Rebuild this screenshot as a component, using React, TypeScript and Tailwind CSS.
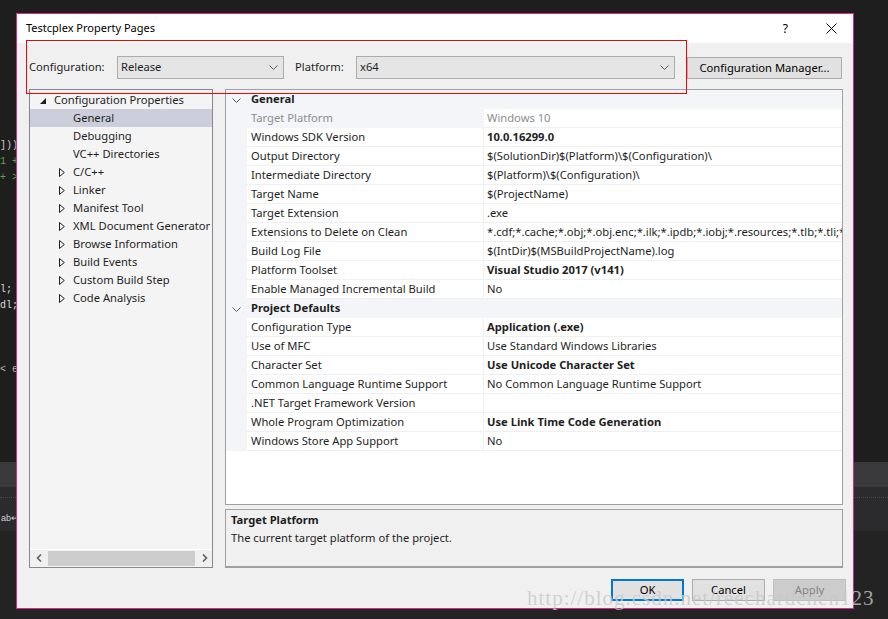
import type { ReactNode } from "react";

type TreeItem = { label: string; level: 0 | 1; expanded?: boolean; collapsed?: boolean; selected?: boolean };

const tree: TreeItem[] = [
  { label: "Configuration Properties", level: 0, expanded: true },
  { label: "General", level: 1, selected: true },
  { label: "Debugging", level: 1 },
  { label: "VC++ Directories", level: 1 },
  { label: "C/C++", level: 1, collapsed: true },
  { label: "Linker", level: 1, collapsed: true },
  { label: "Manifest Tool", level: 1, collapsed: true },
  { label: "XML Document Generator", level: 1, collapsed: true },
  { label: "Browse Information", level: 1, collapsed: true },
  { label: "Build Events", level: 1, collapsed: true },
  { label: "Custom Build Step", level: 1, collapsed: true },
  { label: "Code Analysis", level: 1, collapsed: true },
];

type Prop = { name: string; value: string; bold?: boolean; readonly?: boolean };

const groups: { title: string; rows: Prop[] }[] = [
  {
    title: "General",
    rows: [
      { name: "Target Platform", value: "Windows 10", readonly: true },
      { name: "Windows SDK Version", value: "10.0.16299.0", bold: true },
      { name: "Output Directory", value: "$(SolutionDir)$(Platform)\\$(Configuration)\\" },
      { name: "Intermediate Directory", value: "$(Platform)\\$(Configuration)\\" },
      { name: "Target Name", value: "$(ProjectName)" },
      { name: "Target Extension", value: ".exe" },
      {
        name: "Extensions to Delete on Clean",
        value: "*.cdf;*.cache;*.obj;*.obj.enc;*.ilk;*.ipdb;*.iobj;*.resources;*.tlb;*.tli;*.tlh;*.tmp;*.rsp;*.pgc;*.pgd;*.meta;*.tlog",
      },
      { name: "Build Log File", value: "$(IntDir)$(MSBuildProjectName).log" },
      { name: "Platform Toolset", value: "Visual Studio 2017 (v141)", bold: true },
      { name: "Enable Managed Incremental Build", value: "No" },
    ],
  },
  {
    title: "Project Defaults",
    rows: [
      { name: "Configuration Type", value: "Application (.exe)", bold: true },
      { name: "Use of MFC", value: "Use Standard Windows Libraries" },
      { name: "Character Set", value: "Use Unicode Character Set", bold: true },
      { name: "Common Language Runtime Support", value: "No Common Language Runtime Support" },
      { name: ".NET Target Framework Version", value: "" },
      { name: "Whole Program Optimization", value: "Use Link Time Code Generation", bold: true },
      { name: "Windows Store App Support", value: "No" },
    ],
  },
];

// bits of the code editor that peek out from behind the dialog
const codeLines: { text: string; color: string }[] = [
  { text: "]));", color: "text-[#c8c8c8]" },
  { text: "1 + ", color: "text-[#57a64a]" },
  { text: "+ >", color: "text-[#57a64a]" },
  { text: "", color: "" },
  { text: "", color: "" },
  { text: "", color: "" },
  { text: "", color: "" },
  { text: "", color: "" },
  { text: "", color: "" },
  { text: "l;", color: "text-[#dcdcdc]" },
  { text: "dl;", color: "text-[#dcdcdc]" },
  { text: "", color: "" },
  { text: "", color: "" },
  { text: "", color: "" },
  { text: "< e", color: "text-[#b4b4b4]" },
];

function Chevron({ className = "" }: { className?: string }) {
  return (
    <svg width="9" height="5" viewBox="0 0 9 5" className={className}>
      <polyline points="0.5,0.5 4.5,4.5 8.5,0.5" fill="none" stroke="#5a5a5a" strokeWidth="1" />
    </svg>
  );
}

function Combo({ value, width }: { value: string; width: string }) {
  return (
    <div className={`${width} h-[23px] shrink-0 flex items-center justify-between bg-[#e5e5e5] border border-[#acacac] pl-[3px] pr-[5px]`}>
      <span>{value}</span>
      <Chevron />
    </div>
  );
}

function Button({ children, variant = "normal", width }: { children: ReactNode; variant?: "normal" | "default" | "disabled"; width: string }) {
  const look =
    variant === "default"
      ? "border-2 border-[#0078d7] bg-[#e1e1e1] text-[#000]"
      : variant === "disabled"
      ? "border border-[#bfbfbf] bg-[#cccccc] text-[#838383]"
      : "border border-[#adadad] bg-[#e1e1e1] text-[#000]";
  return <div className={`${width} h-[22px] shrink-0 flex items-center justify-center ${look}`}>{children}</div>;
}

function TreeRow({ item }: { item: TreeItem }) {
  return (
    <div className={`h-[18px] flex items-center relative ${item.selected ? "bg-[#cccedb]" : ""}`}>
      {item.expanded && (
        <svg width="6" height="6" viewBox="0 0 6 6" className="absolute left-[10px] top-[7px]">
          <polygon points="6,0 6,6 0,6" fill="#1e1e1e" />
        </svg>
      )}
      {item.collapsed && (
        <svg width="6" height="9" viewBox="0 0 6 9" className="absolute left-[29px] top-[5px]">
          <polygon points="0.5,0.5 5.3,4.5 0.5,8.5" fill="none" stroke="#1e1e1e" strokeWidth="1" />
        </svg>
      )}
      <span className={item.level === 0 ? "pl-[24px]" : "pl-[43px]"}>{item.label}</span>
    </div>
  );
}

function PropRow({ row }: { row: Prop }) {
  return (
    <div className="flex h-[19px]">
      <div className="w-[21px] shrink-0 bg-[#f3f5f9]" />
      <div
        className={`w-[237px] shrink-0 flex items-center pl-[4px] border-r border-b ${
          row.readonly ? "bg-[#f3f5f9] text-[#8d8d8d] border-[#f3f5f9]" : "bg-white border-[#eef0f4]"
        }`}
      >
        {row.name}
      </div>
      <div
        className={`flex-1 min-w-0 flex items-center pl-[3px] bg-white border-b border-[#eef0f4] overflow-hidden whitespace-nowrap ${
          row.readonly ? "text-[#8d8d8d]" : ""
        } ${row.bold ? "font-bold" : ""}`}
      >
        {row.value}
      </div>
    </div>
  );
}

function CategoryRow({ title }: { title: string }) {
  return (
    <div className="h-[19px] flex items-center bg-[#f3f5f9] relative">
      <Chevron className="absolute left-[6px] top-[8px]" />
      <span className="pl-[25px] font-bold">{title}</span>
    </div>
  );
}

export default function App() {
  return (
    <div className="w-[888px] h-[619px] relative overflow-hidden bg-[#1e1e1e] font-['Noto_Sans','Open_Sans',sans-serif] text-[11.2px] text-[#1e1e1e]">
      {/* editor behind the dialog */}
      <div className="flex flex-col h-full">
        <div className="h-[462px] pt-[138px] flex flex-col font-['Liberation_Mono',monospace] text-[10px]">
          {codeLines.map((l, i) => (
            <div key={i} className={`h-[16px] leading-[16px] whitespace-pre ${l.color}`}>
              {l.text}
            </div>
          ))}
        </div>
        <div className="h-[25px] bg-[#3a3a3d]" />
        <div className="h-[44px] bg-[#2b2b2d] flex flex-col">
          <div className="mt-[10px] border-t border-dotted border-[#48484b]" />
          <div className="mt-[16px] pl-[1px] text-[9px] leading-[9px] text-[#d0d0d0] font-['Liberation_Sans',sans-serif]">ab↵</div>
        </div>
        <div className="flex-1 bg-[#232323]" />
      </div>

      {/* dialog window */}
      <div className="absolute left-[16px] top-[13px] w-[838px] h-[596px] border border-[#d62a8c] flex flex-col">
        <div className="h-[29px] shrink-0 bg-white flex items-center pl-[9px] text-[#000]">
          <span className="text-[11px]">Testcplex Property Pages</span>
          <span className="ml-auto mr-[38px] text-[12px]">?</span>
          <svg width="11" height="11" viewBox="0 0 11 11" className="mr-[16px]">
            <line x1="0.5" y1="0.5" x2="10.5" y2="10.5" stroke="#000" strokeWidth="1" />
            <line x1="10.5" y1="0.5" x2="0.5" y2="10.5" stroke="#000" strokeWidth="1" />
          </svg>
        </div>

        <div className="flex-1 bg-[#f0f0f0] flex flex-col pl-[12px] pr-[10px]">
          <div className="mt-[13px] h-[23px] flex items-center">
            <span className="w-[88px] shrink-0">Configuration:</span>
            <Combo value="Release" width="w-[167px]" />
            <span className="ml-[11px] w-[61px] shrink-0">Platform:</span>
            <Combo value="x64" width="w-[319px]" />
            <div className="ml-[12px] mt-[1px]">
              <Button width="w-[155px]">Configuration Manager...</Button>
            </div>
          </div>

          <div className="mt-[10px] h-[479px] flex">
            <div className="w-[184px] h-[479px] shrink-0 border border-[#828790] bg-[#f4f4f4] flex flex-col">
              <div className="flex-1 pt-[1px]">
                {tree.map((t) => (
                  <TreeRow key={t.label} item={t} />
                ))}
              </div>
              <div className="h-[17px] mb-[1px] border-t border-white bg-[#f0f0f0] flex items-center">
                <svg width="6" height="8" viewBox="0 0 6 8" className="ml-[6px]">
                  <polyline points="5,0.5 1.5,4 5,7.5" fill="none" stroke="#606060" strokeWidth="1.6" />
                </svg>
                <div className="ml-[6px] w-[147px] h-[15px] bg-[#cdcdcd]" />
                <svg width="6" height="8" viewBox="0 0 6 8" className="ml-[7px]">
                  <polyline points="1,0.5 4.5,4 1,7.5" fill="none" stroke="#606060" strokeWidth="1.6" />
                </svg>
              </div>
            </div>

            <div className="ml-[12px] w-[618px] flex flex-col">
              <div className="h-[416px] border border-[#a0a0a0] bg-white overflow-hidden">
                {groups.map((g) => (
                  <div key={g.title}>
                    <CategoryRow title={g.title} />
                    {g.rows.map((r) => (
                      <PropRow key={r.name} row={r} />
                    ))}
                  </div>
                ))}
              </div>
              <div className="mt-[4px] h-[59px] border border-b-2 border-[#a0a0a0] bg-[#f0f0f0] pl-[5px] pt-[1px] leading-[18px]">
                <div className="font-bold">Target Platform</div>
                <div>The current target platform of the project.</div>
              </div>
            </div>
          </div>

          <div className="mt-[11px] mr-[-3px] flex justify-end gap-[8px]">
            <Button variant="default" width="w-[73px]">OK</Button>
            <Button width="w-[73px]">Cancel</Button>
            <Button variant="disabled" width="w-[73px]">Apply</Button>
          </div>
        </div>
      </div>

      {/* screenshot annotation and watermark */}
      <div className="absolute left-[26px] top-[40px] w-[661px] h-[54px] border border-[#ff0000]" />
      <div className="absolute left-[527px] top-[584px] font-['Liberation_Serif',serif] text-[21px] tracking-[1px] leading-[28px] text-[rgba(200,200,200,0.8)] whitespace-nowrap">
        http://blog.csdn.net/reechardchen123
      </div>
    </div>
  );
}
